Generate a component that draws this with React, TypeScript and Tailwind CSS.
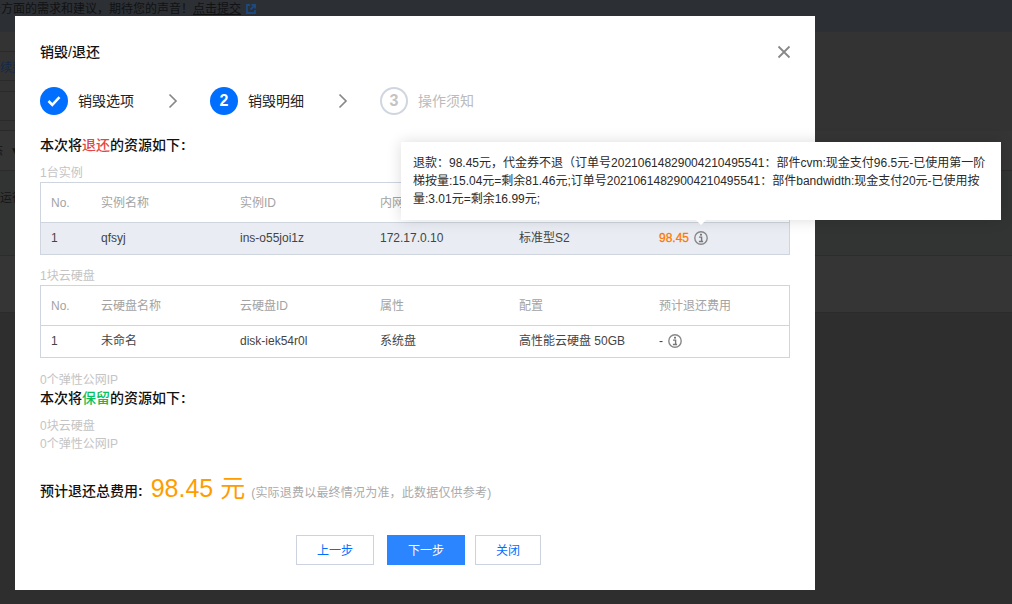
const font = '[font-family:"Liberation_Sans","Noto_Sans_CJK_SC",sans-serif]';

function Info() {
  return (
    <svg width="14" height="14" viewBox="0 0 14 14" fill="none" className="shrink-0">
      <circle cx="7" cy="7" r="6.2" stroke="#888888" strokeWidth="1.4" />
      <rect x="6" y="2.8" width="2" height="1.8" fill="#777777" />
      <path d="M5 6.1h2.6v4.2M4.9 10.5h4.2" stroke="#777777" strokeWidth="1.4" />
    </svg>
  );
}

function Chevron() {
  return (
    <svg width="10" height="16" viewBox="0 0 10 16" fill="none" className="shrink-0">
      <path d="M1.5 1.5 8 8l-6.5 6.5" stroke="#888888" strokeWidth="1.7" />
    </svg>
  );
}

function Step({ circle, label, muted, last }: { circle: React.ReactNode; label: string; muted?: boolean; last?: boolean }) {
  return (
    <div className="flex h-7 w-[170px] items-center">
      {circle}
      <span className={`ml-[10px] w-[90px] text-sm ${muted ? "text-[#bbbbbb]" : "text-[#222222]"}`}>{label}</span>
      {!last && <Chevron />}
    </div>
  );
}

function Section({ before, mark, color }: { before: string; mark: string; color: string }) {
  return (
    <div className="text-sm leading-[18px] font-medium text-[#111111]">
      {before}
      <span className={color}>{mark}</span>的资源如下<span className="ml-px font-bold">:</span>
    </div>
  );
}

function Label({ children }: { children: React.ReactNode }) {
  return <div className="text-xs leading-[18px] text-[#c4c4c4]">{children}</div>;
}

const cols = "grid grid-cols-[50px_139px_140px_139px_140px_140px]";

function Table({ head, row, highlight }: { head: string[]; row: React.ReactNode[]; highlight?: boolean }) {
  return (
    <div className="border border-[#cfd5de] text-xs">
      <div className={`${cols} h-[40px] items-center border-b border-[#cfd5de] text-[#a3a3a3]`}>
        {head.map((h, i) => (
          <div key={i} className="pl-[10px] whitespace-nowrap">{h}</div>
        ))}
      </div>
      <div className={`${cols} h-[31px] items-center pb-px text-[#444444] ${highlight ? "bg-[#e9edf3]" : ""}`}>
        {row.map((c, i) => (
          <div key={i} className="pl-[10px] whitespace-nowrap">{c}</div>
        ))}
      </div>
    </div>
  );
}

function BgRow({ h, bg, children }: { h: string; bg: string; children?: React.ReactNode }) {
  return (
    <div className={`flex ${h} ${bg} shrink-0 overflow-hidden`}>
      <div className="flex w-[15px] shrink-0 items-center overflow-hidden border-b border-[#2a2a2a] whitespace-nowrap">{children}</div>
    </div>
  );
}

export default function App() {
  return (
    <div className={`relative h-[604px] w-[1012px] overflow-hidden bg-[#2e2e2e] ${font}`}>
      {/* dimmed page behind the dialog */}
      <div className="flex h-full flex-col">
        <div className="flex h-8 shrink-0 items-start bg-[#2c2f33] pt-px text-xs leading-4 whitespace-nowrap text-[#101214]">
          <span className="ml-[-11px]">务方面的需求和建议，期待您的声音！</span>
          <span className="underline">点击提交</span>
          <svg width="10" height="10" viewBox="0 0 10 10" fill="none" className="mt-[3px] ml-[5px]">
            <path d="M4 1H1v8h8V6" stroke="#1c4a80" strokeWidth="1.8" />
            <path d="M5.5 .9H9.1V4.5M9 1 4.5 5.5" stroke="#1c4a80" strokeWidth="1.8" />
          </svg>
        </div>
        <BgRow h="h-[20px]" bg="bg-[#333333]" />
        <BgRow h="h-[29px]" bg="bg-[#333333]">
          <span className="pt-[3px] text-xs text-[#14294a]">续费</span>
        </BgRow>
        <BgRow h="h-[11px]" bg="bg-[#333333]" />
        <BgRow h="h-[29px]" bg="bg-[#333333]" />
        <BgRow h="h-[10px]" bg="bg-[#333333]" />
        <div className="flex h-[40px] shrink-0 border-b border-[#2c2c2c] bg-[#353535]">
          <div className="flex w-[15px] items-center overflow-hidden text-xs whitespace-nowrap text-[#151515]">
            <span className="ml-[-9px]">态</span>
            <span className="ml-[7px] text-[10px]">▼</span>
          </div>
        </div>
        <div className="flex h-[85px] shrink-0 border-b border-[#2c2c2c] bg-[#323434]">
          <div className="flex w-[15px] items-start overflow-hidden pt-[19px] text-xs whitespace-nowrap text-[#151515]">运行</div>
        </div>
        <div className="h-[57px] shrink-0 border-b border-[#2b2b2b] bg-[#353535]" />
        <div className="flex-1 bg-[#2e2e2e]" />
      </div>

      {/* dialog */}
      <div className="absolute top-4 left-[15px] flex h-[574px] w-[800px] flex-col bg-white px-[25px]">
        <div className="mt-[27px] flex h-[18px] items-center justify-between">
          <div className="text-sm leading-[18px] font-medium text-[#111111]">销毁/退还</div>
          <svg width="14" height="14" viewBox="0 0 14 14" fill="none" className="mr-[-1px]">
            <path d="M1.5 1.5l11 11M12.5 1.5l-11 11" stroke="#888888" strokeWidth="1.8" />
          </svg>
        </div>

        <div className="mt-[26px] flex">
          <Step
            label="销毁选项"
            circle={
              <div className="flex size-7 shrink-0 items-center justify-center rounded-full bg-[#006eff]">
                <svg width="14" height="12" viewBox="0 0 14 12" fill="none">
                  <path d="M1.5 6l3.8 3.8L12.5 2.2" stroke="white" strokeWidth="2.6" />
                </svg>
              </div>
            }
          />
          <Step
            label="销毁明细"
            circle={<div className="flex size-7 shrink-0 items-center justify-center rounded-full bg-[#006eff] text-base font-bold text-white">2</div>}
          />
          <Step
            label="操作须知"
            muted
            last
            circle={<div className="flex size-7 shrink-0 items-center justify-center rounded-full border-2 border-[#d0d6e0] text-base font-bold text-[#c4c4c4]">3</div>}
          />
        </div>

        <div className="mt-[21px]">
          <Section before="本次将" mark="退还" color="text-[#e54545]" />
        </div>
        <div className="mt-[10px]"><Label>1台实例</Label></div>
        <div>
          <Table
            highlight
            head={["No.", "实例名称", "实例ID", "内网IP", "", ""]}
            row={[
              "1",
              "qfsyj",
              "ins-o55joi1z",
              "172.17.0.10",
              "标准型S2",
              <span className="flex items-center gap-[5px]">
                <span className="text-[#ff7800] [-webkit-text-stroke:0.3px_#ff7800]">98.45</span>
                <Info />
              </span>,
            ]}
          />
        </div>
        <div className="mt-[12px]"><Label>1块云硬盘</Label></div>
        <div>
          <Table
            head={["No.", "云硬盘名称", "云硬盘ID", "属性", "配置", "预计退还费用"]}
            row={[
              "1",
              "未命名",
              "disk-iek54r0l",
              "系统盘",
              "高性能云硬盘 50GB",
              <span className="flex items-center gap-[5px]">
                <span>-</span>
                <Info />
              </span>,
            ]}
          />
        </div>
        <div className="mt-[13px]"><Label>0个弹性公网IP</Label></div>
        <div>
          <Section before="本次将" mark="保留" color="text-[#0abf5b]" />
        </div>
        <div className="mt-[10px]">
          <Label>0块云硬盘</Label>
          <Label>0个弹性公网IP</Label>
        </div>

        <div className="mt-[22px] flex h-8 items-center whitespace-nowrap">
          <span className="text-sm font-medium text-[#111111]">预计退还总费用<span className="font-bold">:</span></span>
          <span className="mb-[6px] ml-2 text-[25px] leading-8 text-[#ff9d00]">98.45 元</span>
          <span className="ml-[6px] pt-[3px] text-xs tracking-[0.2px] text-[#aaaaaa]">(实际退费以最终情况为准，此数据仅供参考)</span>
        </div>

        <div className="mt-[28px] flex justify-center pr-[1px] pl-[8px] text-xs">
          <button className="h-[30px] w-[78px] border border-[#ccd3de] bg-white pt-px text-[#006eff]">上一步</button>
          <button className="ml-[13px] h-[30px] w-[78px] bg-[#2b85ff] pt-px text-white">下一步</button>
          <button className="ml-[10px] h-[30px] w-[66px] border border-[#ccd3de] bg-white pt-px text-[#006eff]">关闭</button>
        </div>
      </div>

      {/* tooltip */}
      <div className="absolute top-[142px] left-[401px] h-[78px] w-[600px] bg-white px-3 pt-[12px] text-xs leading-[18px] text-[#2a2a2a] shadow-[0_0_14px_rgba(0,0,0,0.14)]">
        退款：98.45元，代金券不退（订单号20210614829004210495541：部件cvm:现金支付96.5元-已使用第一阶梯按量:15.04元=剩余81.46元;订单号20210614829004210495541：部件bandwidth:现金支付20元-已使用按量:3.01元=剩余16.99元;
        <div className="absolute top-full left-[295px] size-0 border-x-[5px] border-t-[5px] border-x-transparent border-t-white" />
      </div>
    </div>
  );
}
